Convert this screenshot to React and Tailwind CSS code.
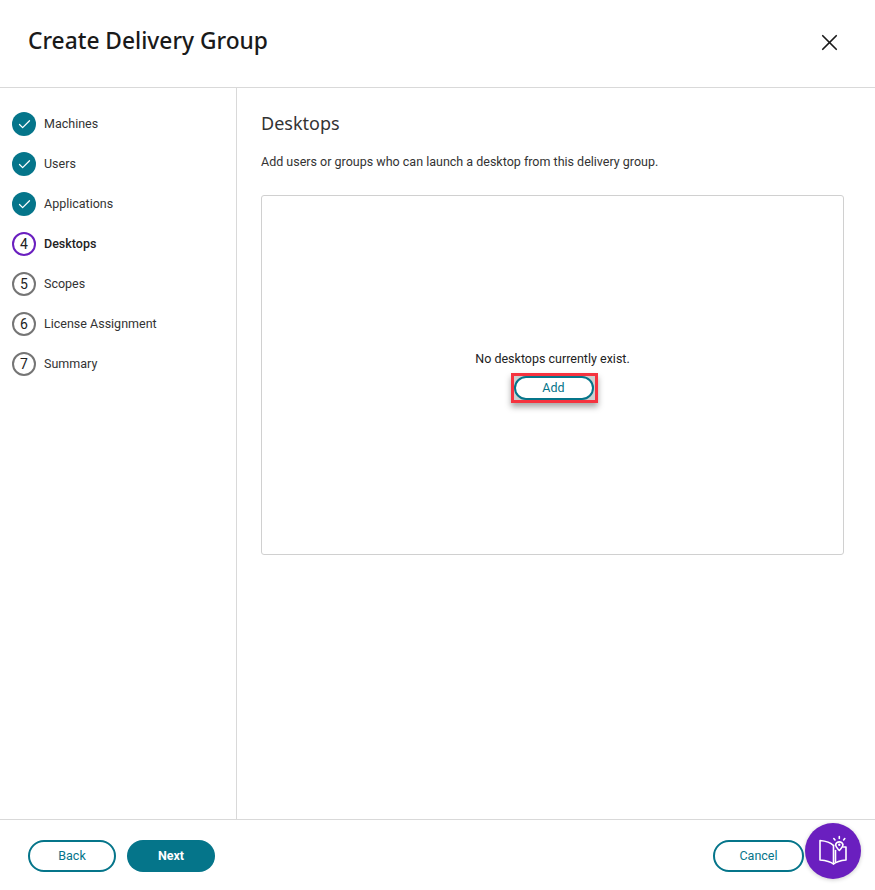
import { Check, X } from "lucide-react";

const steps = [
  { n: 1, label: "Machines", state: "done" },
  { n: 2, label: "Users", state: "done" },
  { n: 3, label: "Applications", state: "done" },
  { n: 4, label: "Desktops", state: "active" },
  { n: 5, label: "Scopes", state: "todo" },
  { n: 6, label: "License Assignment", state: "todo" },
  { n: 7, label: "Summary", state: "todo" },
];

function StepIcon({ step }) {
  if (step.state === "done") {
    return (
      <div className="flex h-6 w-6 items-center justify-center rounded-full bg-[#05758a] text-white">
        <Check size={15} strokeWidth={2} />
      </div>
    );
  }
  if (step.state === "active") {
    return (
      <div className="flex h-6 w-6 items-center justify-center rounded-full border-2 border-[#6a1fbf] text-[14px] text-[#222]">
        {step.n}
      </div>
    );
  }
  return (
    <div className="flex h-6 w-6 items-center justify-center rounded-full border-2 border-[#757575] text-[14px] text-[#222]">
      {step.n}
    </div>
  );
}

function OutlineButton({ children, className }) {
  return (
    <button
      type="button"
      className={`rounded-full border-2 border-[#05758a] bg-white text-[12.5px] font-normal text-[#05758a] ${className}`}
    >
      {children}
    </button>
  );
}

function GuideIcon() {
  return (
    <svg width="56" height="56" viewBox="0 0 56 56" fill="none" stroke="white" strokeWidth="1.6" strokeLinejoin="round" strokeLinecap="round">
      <path d="M28.5 22.5C25.5 19.5 20.5 18 15 17.5V37C20.5 37.5 25.5 38.5 28.5 41C31.5 38.5 36 37.5 41 37V24H38.5" />
      <path d="M28.5 22.5V41" />
      <path d="M30.5 38.5V27.5" />
      <path d="M34.3 27.5C32.5 25.5 30.6 24 30.6 21.8A3.8 3.8 0 0 1 38 21.8C38 24 36.1 25.5 34.3 27.5Z" />
      <circle cx="34.3" cy="21.8" r="1.2" fill="white" stroke="none" />
      <path d="M34.3 13.5V15.5M28.8 15.5L30 17M39.8 15.5L38.6 17" />
    </svg>
  );
}

export default function App() {
  return (
    <div className="relative flex h-[890px] w-[875px] flex-col bg-white font-['Roboto',sans-serif] text-[#222]">
      <header className="flex h-[88px] shrink-0 items-start justify-between border-b border-[#d9d9d9] pl-7 pr-[32px]">
        <h1 className="mt-[26px] font-['Noto_Sans',sans-serif] text-[22.75px] leading-[30px] font-medium text-[#1a1a1a]">
          Create Delivery Group
        </h1>
        <button type="button" className="mt-[29px] text-[#1a1a1a]">
          <X size={27} strokeWidth={1.5} />
        </button>
      </header>

      <div className="flex min-h-0 flex-1">
        <nav className="flex w-[237px] shrink-0 flex-col gap-4 border-r border-[#d9d9d9] pl-3 pt-6">
          {steps.map((step) => (
            <div key={step.n} className="flex h-6 items-center gap-2">
              <StepIcon step={step} />
              <span className={`text-[12.5px] ${step.state === "active" ? "font-medium text-[#222]" : "text-[#333]"}`}>
                {step.label}
              </span>
            </div>
          ))}
        </nav>

        <main className="flex min-w-0 flex-1 flex-col pl-6 pr-[31px] pt-[23px]">
          <h2 className="font-['Noto_Sans',sans-serif] text-[18px] leading-6 text-[#333]">Desktops</h2>
          <p className="mt-[17px] text-[12.5px] leading-5 text-[#333]">
            Add users or groups who can launch a desktop from this delivery group.
          </p>
          <div className="mt-[23px] flex h-[360px] flex-col items-center rounded-[3px] border border-[#d0d0d0] pt-[153px]">
            <p className="text-[12.5px] leading-5 text-[#222]">No desktops currently exist.</p>
            <div className="ml-[3px] mt-[4px] rounded-none border-[3px] border-[#f5333f] bg-[#cfcfcf] pr-[1px] shadow-[0_4px_6px_rgba(0,0,0,0.35)]">
              <OutlineButton className="block h-[24px] w-[80px]">Add</OutlineButton>
            </div>
          </div>
        </main>
      </div>

      <footer className="flex h-[71px] shrink-0 items-start justify-between border-t border-[#d9d9d9] pl-7 pr-[71px] pt-5">
        <div className="flex gap-[11px]">
          <OutlineButton className="h-8 w-[88px]">Back</OutlineButton>
          <button type="button" className="h-8 w-[88px] rounded-full bg-[#05758a] text-[12.5px] font-bold text-white">
            Next
          </button>
        </div>
        <OutlineButton className="h-8 w-[91px]">Cancel</OutlineButton>
      </footer>

      <button
        type="button"
        className="absolute left-[805px] top-[823px] flex h-14 w-14 items-center justify-center rounded-full bg-[#6a1fbf] shadow-[0_1px_4px_rgba(0,0,0,0.2)]"
      >
        <GuideIcon />
      </button>
    </div>
  );
}
